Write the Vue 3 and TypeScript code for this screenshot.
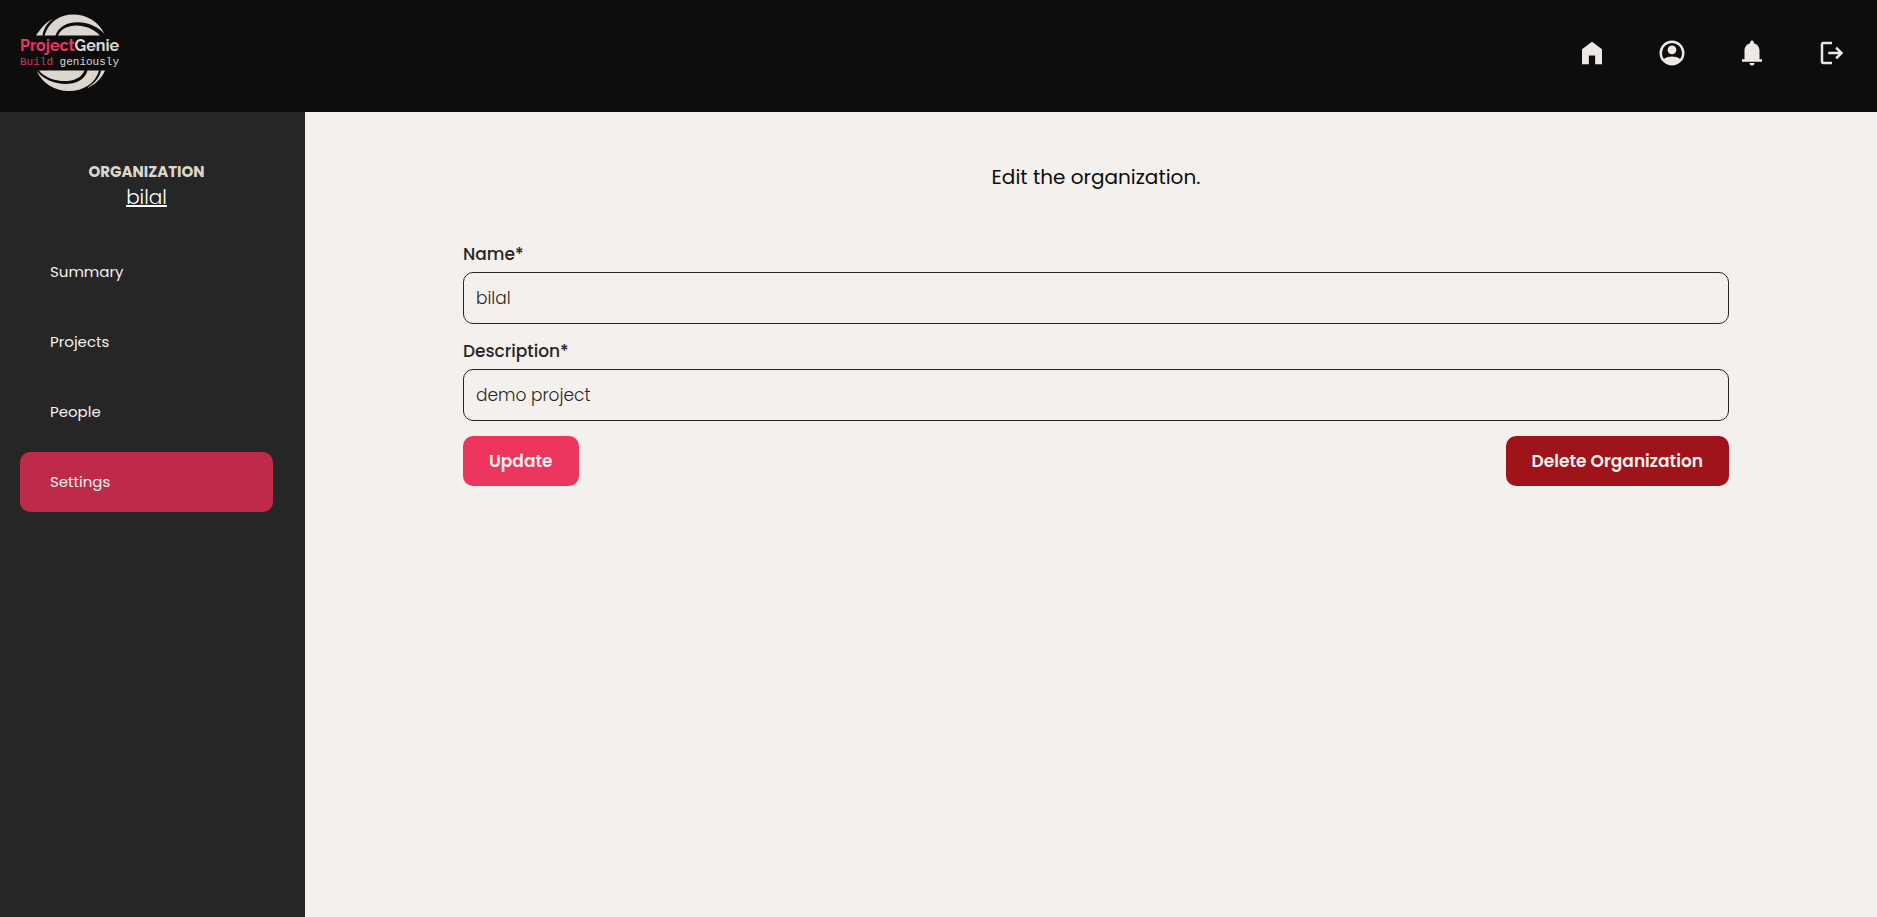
<script setup lang="ts">
import { ref } from 'vue'

interface NavItem {
  label: string
  href: string
  active: boolean
}

const navItems: NavItem[] = [
  { label: 'Summary', href: '#summary', active: false },
  { label: 'Projects', href: '#projects', active: false },
  { label: 'People', href: '#people', active: false },
  { label: 'Settings', href: '#settings', active: true },
]

const name = ref('bilal')
const description = ref('demo project')
</script>

<template>
  <div class="page">
    <header class="topbar">
      <a class="logo" href="#home" aria-label="ProjectGenie">
        <svg width="102" height="80" viewBox="0 0 102 80">
          <g fill="#dbd6d0">
            <path d="M16 22.500C21 15 26 9 33 6C27 10 23.500 16 22.500 22.500Z" />
            <path d="M24.500 22.500C29 8 41 1.500 53 1.500C67 1.500 79 9 84.500 21C74 7 42 3 35.500 22.500Z" />
            <path d="M38 22.500C43 9 68 9 80 22.500Z" />
            <path d="M19 57.500C27 69 58 74 64.500 57.500Z" />
            <path d="M16.500 57.500C28 74 62 77 67.500 57.500H79C75 71 63 78 49 78C34 78 22 70 16.500 57.500Z" />
            <path d="M81 57.500H85C82 65 76 71 67 75C75 70 80 64 81 57.500Z" />
          </g>
          <text class="wordmark" x="0" y="38"><tspan fill="#ee355e">Project</tspan><tspan fill="#dbd6d0">Genie</tspan></text>
          <text class="tagline" x="0" y="52"><tspan fill="#d83658">Build</tspan><tspan fill="#dbd6d0"> geniously</tspan></text>
        </svg>
      </a>
      <nav class="actions" aria-label="Account">
        <a href="#home" aria-label="Home">
          <svg viewBox="0 0 24 24"><path d="M4 21V9l8-6 8 6v12h-5.500v-7h-5v7Z" /></svg>
        </a>
        <a href="#profile" aria-label="Profile">
          <svg viewBox="0 0 24 24"><path fill-rule="evenodd" d="M12 2a10 10 0 1 0 0 20a10 10 0 1 0 0-20ZM5.500 16.700a8 8 0 1 1 13 0C14.500 14.200 9.500 14.200 5.500 16.700Z" /><circle cx="12" cy="9.500" r="3.500" /></svg>
        </a>
        <a href="#notifications" aria-label="Notifications">
          <svg viewBox="0 0 24 24"><path d="M4 19v-2h2v-7c0-2.800 1.700-5.100 4.500-5.800v-.7a1.500 1.500 0 0 1 3 0v.7C16.300 4.900 18 7.200 18 10v7h2v2ZM12 22a2 2 0 0 1-2-2h4a2 2 0 0 1-2 2Z" /></svg>
        </a>
        <button type="button" aria-label="Log out">
          <svg viewBox="0 0 24 24"><path d="M5 21q-.8 0-1.400-.6T3 19V5q0-.8.6-1.400T5 3h7v2H5v14h7v2ZM16 17l-1.400-1.450L17.150 13H9v-2h8.150L14.600 8.450 16 7l5 5Z" /></svg>
        </button>
      </nav>
    </header>

    <div class="body">
      <aside class="sidebar">
        <div class="org">
          <span class="org-title">ORGANIZATION</span>
          <a class="org-name" href="#organization">bilal</a>
        </div>
        <nav class="menu" aria-label="Organization">
          <a
            v-for="item in navItems"
            :key="item.label"
            :href="item.href"
            class="menu-item"
            :class="{ active: item.active }"
          >{{ item.label }}</a>
        </nav>
      </aside>

      <main class="content">
        <h1>Edit the organization.</h1>
        <form @submit.prevent>
          <label for="org-name">Name*</label>
          <input id="org-name" v-model="name" type="text" />
          <label for="org-description">Description*</label>
          <input id="org-description" v-model="description" type="text" />
          <div class="buttons">
            <button class="update" type="submit">Update</button>
            <button class="delete" type="button">Delete Organization</button>
          </div>
        </form>
      </main>
    </div>
  </div>
</template>

<style>
body {
  margin: 0;
}
</style>

<style scoped>
.page {
  min-height: 100vh;
  display: flex;
  flex-direction: column;
  background: #f4f0ed;
  color: #262626;
  font-family: Poppins, Inter, "Open Sans", sans-serif;
}

.topbar {
  display: flex;
  justify-content: space-between;
  align-items: flex-start;
  padding: 13px 30px 19px 20px;
  background: #0d0d0d;
}

.logo,
.logo svg {
  display: block;
}

.wordmark {
  font: 700 16px Raleway, Lato, sans-serif;
}

.tagline {
  font: 400 11px "Liberation Mono", monospace;
  white-space: pre;
}

.actions {
  display: flex;
  gap: 50px;
  padding-top: 25px;
}

.actions a,
.actions button {
  display: flex;
  align-items: center;
  justify-content: center;
  width: 30px;
  height: 30px;
  padding: 0;
  border: 0;
  background: none;
  cursor: pointer;
}

.actions svg {
  width: 30px;
  height: 30px;
  fill: #eee8e3;
}

.body {
  flex: 1;
  display: flex;
}

.sidebar {
  box-sizing: border-box;
  width: 305px;
  flex: none;
  padding: 48px 32px 20px 20px;
  background: #262626;
}

.org {
  display: flex;
  flex-direction: column;
  align-items: center;
  margin-bottom: 32px;
}

.org-title {
  font-size: 15px;
  line-height: 24px;
  font-weight: 700;
  color: #dbd6d0;
}

.org-name {
  font-size: 20px;
  line-height: 26px;
  font-weight: 300;
  color: #fff;
  text-decoration-thickness: 2px;
  text-underline-offset: 1px;
}

.menu {
  display: flex;
  flex-direction: column;
  gap: 10px;
}

.menu-item {
  padding: 0 30px;
  border-radius: 10px;
  font-size: 15px;
  font-weight: 400;
  line-height: 60px;
  color: #f4f0ed;
  text-decoration: none;
}

.menu-item.active {
  background: #be2b4a;
}

.content {
  flex: 1;
  min-width: 0;
  padding: 49px 148px 48px 158px;
}

h1 {
  margin: 0 0 48px;
  font-size: 20px;
  line-height: 32px;
  font-weight: 400;
  text-align: center;
  color: #0d0d0d;
}

form {
  display: flex;
  flex-direction: column;
}

label {
  margin-bottom: 4px;
  font-size: 17px;
  line-height: 27px;
  font-weight: 500;
}

input {
  box-sizing: border-box;
  width: 100%;
  height: 52px;
  margin-bottom: 14px;
  padding: 0 12px;
  border: 1px solid #262626;
  border-radius: 10px;
  background: #f4f0ed;
  color: #262626;
  font: 300 17px Poppins, Inter, "Open Sans", sans-serif;
}

.buttons {
  display: flex;
  justify-content: space-between;
  margin-top: 1px;
}

.buttons button {
  height: 50px;
  padding: 0 26px;
  border: 0;
  border-radius: 10px;
  color: #f4f0ed;
  font: 600 17px Poppins, Inter, "Open Sans", sans-serif;
  cursor: pointer;
}

.buttons .update {
  background: #ed365e;
}

.buttons .delete {
  background: #9f131b;
}
</style>
